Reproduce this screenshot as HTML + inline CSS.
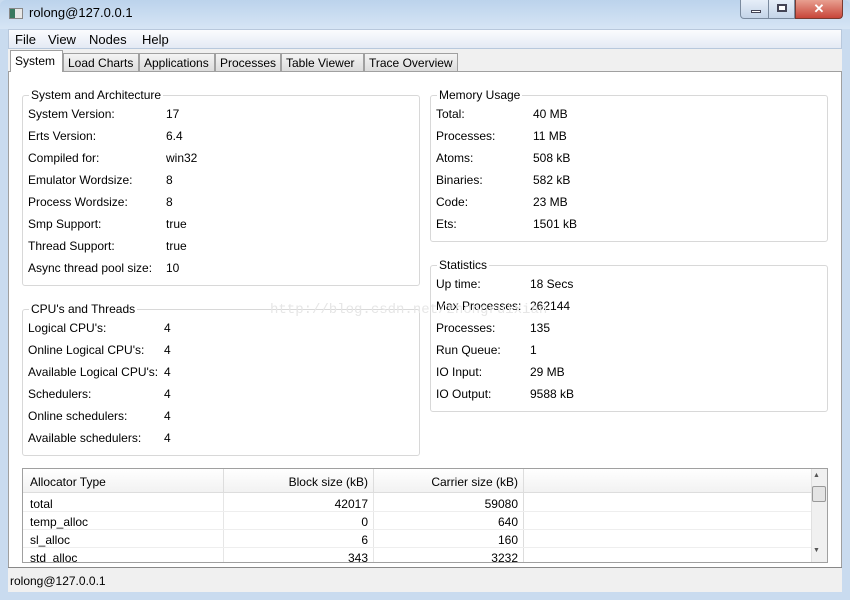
<html><head><style>
*{margin:0;padding:0;box-sizing:border-box}
body{width:850px;height:600px;overflow:hidden;background:#c9dbef;font-family:"Liberation Sans",sans-serif;font-size:12px;color:#000;position:relative}
.a{position:absolute}
.grp{position:absolute;border:1px solid #d8d8d8;border-radius:3px}
.gt{position:absolute;top:-8px;left:6px;background:#fff;padding:0 2px;font-size:12px}
.r{position:absolute;white-space:nowrap}
.tab{position:absolute;top:53px;height:18px;border:1px solid #a0a0a0;border-bottom:none;background:linear-gradient(#f4f4f4,#dcdcdc);padding:2px 4px;font-size:12px}
</style></head><body>
<div class="a" style="left:0;top:0;width:850px;height:29px;background:linear-gradient(#bcd3ec,#d6e5f5);border-radius:6px 6px 0 0"></div>
<div class="a" style="left:9px;top:8px;width:14px;height:11px;background:#e8e8e8;border:1px solid #888"><div style="width:5px;height:9px;background:#3a7a60"></div></div>
<div class="a" style="left:29px;top:5px;font-size:13px">rolong@127.0.0.1</div>
<div class="a" style="left:740px;top:0;width:29px;height:19px;border:1px solid #7a8a9e;border-top:none;border-radius:0 0 0 4px;background:linear-gradient(#e6eef8,#c4d4e8)"><div style="position:absolute;left:10px;top:10px;width:10px;height:3px;background:#fff;border:1px solid #445"></div></div>
<div class="a" style="left:768px;top:0;width:27px;height:19px;border:1px solid #7a8a9e;border-top:none;background:linear-gradient(#e6eef8,#c4d4e8)"><div style="position:absolute;left:8px;top:4px;width:10px;height:8px;border:2px solid #445;background:#fff"></div></div>
<div class="a" style="left:795px;top:0;width:48px;height:19px;border:1px solid #7a3a30;border-top:none;border-radius:0 0 4px 0;background:linear-gradient(#e8a090,#c8463a);color:#fff;font-weight:bold;text-align:center;font-size:13px;line-height:17px">✕</div>
<div class="a" style="left:8px;top:29px;width:834px;height:563px;background:#f0f0f0"></div>
<div class="a" style="left:8px;top:29px;width:834px;height:20px;background:linear-gradient(#fbfcfe,#e4eaf4);border:1px solid #b8c8dc"></div>
<div class="a" style="left:15px;top:32px;font-size:13px">File</div>
<div class="a" style="left:48px;top:32px;font-size:13px">View</div>
<div class="a" style="left:89px;top:32px;font-size:13px">Nodes</div>
<div class="a" style="left:142px;top:32px;font-size:13px">Help</div>
<div class="a" style="left:8px;top:71px;width:834px;height:497px;background:#fff;border:1px solid #a0a0a0"></div>
<div class="tab" style="left:10px;top:50px;height:22px;background:#fff;padding-top:3px;width:53px">System</div>
<div class="tab" style="left:63px;width:76px">Load Charts</div>
<div class="tab" style="left:139px;width:76px">Applications</div>
<div class="tab" style="left:215px;width:66px">Processes</div>
<div class="tab" style="left:281px;width:83px">Table Viewer</div>
<div class="tab" style="left:364px;width:94px">Trace Overview</div>

<div class="grp" style="left:22px;top:95px;width:398px;height:191px"><div class="gt">System and Architecture</div></div>
<div class="r" style="left:28px;top:103px;line-height:22px">System Version:<br>Erts Version:<br>Compiled for:<br>Emulator Wordsize:<br>Process Wordsize:<br>Smp Support:<br>Thread Support:<br>Async thread pool size:</div>
<div class="r" style="left:166px;top:103px;line-height:22px">17<br>6.4<br>win32<br>8<br>8<br>true<br>true<br>10</div>

<div class="grp" style="left:22px;top:309px;width:398px;height:147px"><div class="gt">CPU's and Threads</div></div>
<div class="r" style="left:28px;top:317px;line-height:22px">Logical CPU's:<br>Online Logical CPU's:<br>Available Logical CPU's:<br>Schedulers:<br>Online schedulers:<br>Available schedulers:</div>
<div class="r" style="left:164px;top:317px;line-height:22px">4<br>4<br>4<br>4<br>4<br>4</div>

<div class="grp" style="left:430px;top:95px;width:398px;height:147px"><div class="gt">Memory Usage</div></div>
<div class="r" style="left:436px;top:103px;line-height:22px">Total:<br>Processes:<br>Atoms:<br>Binaries:<br>Code:<br>Ets:</div>
<div class="r" style="left:533px;top:103px;line-height:22px">40 MB<br>11 MB<br>508 kB<br>582 kB<br>23 MB<br>1501 kB</div>

<div class="grp" style="left:430px;top:265px;width:398px;height:147px"><div class="gt">Statistics</div></div>
<div class="r" style="left:436px;top:273px;line-height:22px">Up time:<br>Max Processes:<br>Processes:<br>Run Queue:<br>IO Input:<br>IO Output:</div>
<div class="r" style="left:530px;top:273px;line-height:22px">18 Secs<br>262144<br>135<br>1<br>29 MB<br>9588 kB</div>
<div class="r" style="left:270px;top:302px;font-family:'Liberation Mono',monospace;font-size:14px;color:#e6e6e6">http://blog.csdn.net/zhongruixian</div>

<div class="a" style="left:22px;top:468px;width:806px;height:95px;border:1px solid #a0a0a0;overflow:hidden;background:#fff">
 <div class="a" style="left:0;top:0;width:788px;height:24px;background:linear-gradient(#fff,#f2f2f2);border-bottom:1px solid #ddd"></div>
 <div class="a" style="left:200px;top:0;width:1px;height:24px;background:#ddd"></div>
 <div class="a" style="left:350px;top:0;width:1px;height:24px;background:#ddd"></div>
 <div class="a" style="left:500px;top:0;width:1px;height:95px;background:#ddd"></div>
 <div class="a" style="left:200px;top:24px;width:1px;height:71px;background:#e6e6e6"></div>
 <div class="a" style="left:350px;top:24px;width:1px;height:71px;background:#e6e6e6"></div>
 <div class="r" style="left:7px;top:6px">Allocator Type</div>
 <div class="r" style="left:200px;top:6px;width:145px;text-align:right">Block size (kB)</div>
 <div class="r" style="left:350px;top:6px;width:145px;text-align:right">Carrier size (kB)</div>
 <div class="r" style="left:7px;top:26px;line-height:18px">total<br>temp_alloc<br>sl_alloc<br>std_alloc</div>
 <div class="r" style="left:200px;top:26px;width:145px;text-align:right;line-height:18px">42017<br>0<br>6<br>343</div>
 <div class="r" style="left:350px;top:26px;width:145px;text-align:right;line-height:18px">59080<br>640<br>160<br>3232</div>
 <div class="a" style="left:0;top:42px;width:788px;height:1px;background:#eee"></div>
 <div class="a" style="left:0;top:60px;width:788px;height:1px;background:#eee"></div>
 <div class="a" style="left:0;top:78px;width:788px;height:1px;background:#eee"></div>
 <div class="a" style="left:788px;top:0;width:17px;height:95px;background:#f0f0f0;border-left:1px solid #e0e0e0"></div>
 <div class="a" style="left:790px;top:3px;font-size:7px;color:#555">▲</div>
 <div class="a" style="left:789px;top:17px;width:14px;height:16px;background:#e4e4e4;border:1px solid #999;border-radius:2px"></div>
 <div class="a" style="left:790px;top:78px;font-size:7px;color:#555">▼</div>
</div>

<div class="a" style="left:8px;top:567px;width:834px;height:1px;background:#888"></div>
<div class="a" style="left:10px;top:574px">rolong@127.0.0.1</div>
<div class="a" style="left:0;top:592px;width:850px;height:8px;background:#c9dbef"></div>
</body></html>
